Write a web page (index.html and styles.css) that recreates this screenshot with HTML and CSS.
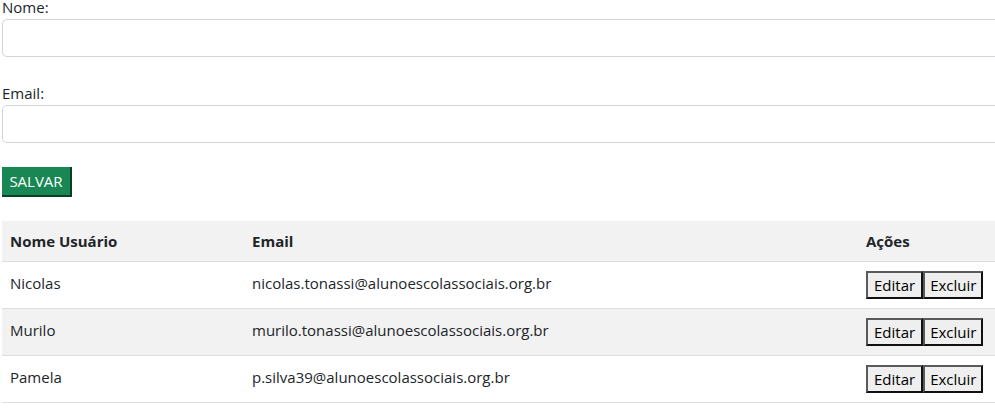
FILE: index.html
```html
<!DOCTYPE html>
<html lang="pt-BR">
<head>
<meta charset="utf-8">
<title>Usuários</title>
<link rel="stylesheet" href="styles.css">
</head>
<body>
<form class="form">
  <div class="field">
    <label class="label" for="nome">Nome:</label>
    <input class="input" id="nome" type="text">
  </div>
  <div class="field field-second">
    <label class="label" for="email">Email:</label>
    <input class="input" id="email" type="text">
  </div>
  <button class="btn-save" type="button">SALVAR</button>
</form>
<table class="table">
  <thead>
    <tr>
      <th class="col-name">Nome Usuário</th>
      <th class="col-email">Email</th>
      <th class="col-actions">Ações</th>
    </tr>
  </thead>
  <tbody>
    <tr>
      <td>Nicolas</td>
      <td>nicolas.tonassi@alunoescolassociais.org.br</td>
      <td class="actions"><button class="btn" type="button">Editar</button><button class="btn" type="button">Excluir</button></td>
    </tr>
    <tr class="striped">
      <td>Murilo</td>
      <td>murilo.tonassi@alunoescolassociais.org.br</td>
      <td class="actions"><button class="btn" type="button">Editar</button><button class="btn" type="button">Excluir</button></td>
    </tr>
    <tr>
      <td>Pamela</td>
      <td>p.silva39@alunoescolassociais.org.br</td>
      <td class="actions"><button class="btn" type="button">Editar</button><button class="btn" type="button">Excluir</button></td>
    </tr>
  </tbody>
</table>
</body>
</html>
```
FILE: styles.css
```css
html, body {
  margin: 0;
  padding: 0;
  background: #fff;
  overflow: hidden;
}
body {
  font-family: "Open Sans", "Noto Sans", sans-serif;
  font-size: 15px;
  color: #212529;
  padding-left: 2px;
  width: 1010px;
}
.form {
  display: flex;
  flex-direction: column;
  align-items: flex-start;
}
.field {
  display: flex;
  flex-direction: column;
  width: 100%;
}
.field-second {
  margin-top: 29px;
}
.label {
  line-height: 15px;
  height: 19px;
  display: block;
}
.input {
  box-sizing: border-box;
  height: 38px;
  width: 100%;
  border: 1px solid #ced4da;
  border-radius: 5px;
  margin: 0;
  background: #fff;
}
.btn-save {
  margin-top: 24px;
  box-sizing: border-box;
  height: 30px;
  width: 70px;
  padding: 0;
  background: #198754;
  color: #fff;
  font-family: inherit;
  font-size: 15px;
  border: 0;
  border-right: 2px solid #0d3f25;
  border-bottom: 2px solid #0d3f25;
}
.table {
  margin-top: 24px;
  width: 1010px;
  border-collapse: collapse;
}
.table th {
  text-align: left;
  font-weight: 700;
  background: #f2f2f2;
  height: 40px;
  padding: 0 8px;
  box-sizing: border-box;
  border-bottom: 1px solid #dddddd;
}
.table td {
  height: 47px;
  padding: 0 8px 4px;
  box-sizing: border-box;
  border-bottom: 1px solid #dddddd;
}
.table td.actions {
  padding: 1px 8px 0;
}
.table .col-name { width: 242px; }
.table .col-email { width: 614px; }
.striped td {
  background: #f2f2f2;
}
.btn {
  font-family: inherit;
  font-size: 15px;
  color: #000;
  background: #efefef;
  height: 28px;
  padding: 0 6px;
  margin: 0;
  border: 2px solid;
  border-color: #5a5a5a #111 #111 #5a5a5a;
  box-sizing: border-box;
}
.btn + .btn {
  padding: 0 5px;
}
```
